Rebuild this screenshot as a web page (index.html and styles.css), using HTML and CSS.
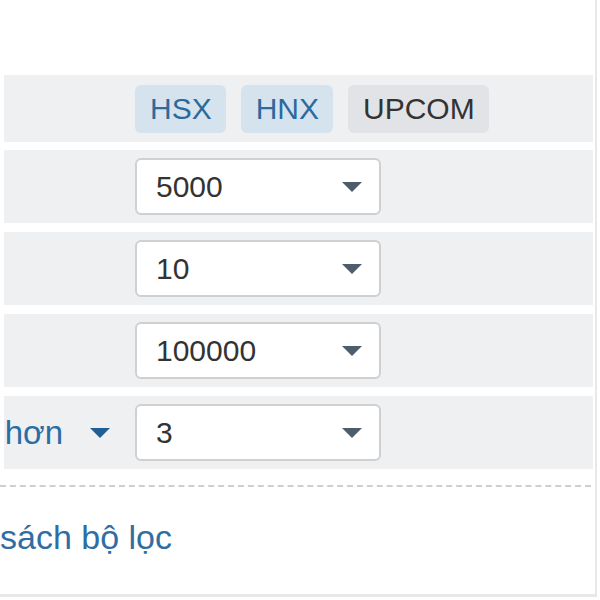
FILE: index.html
```html
<!DOCTYPE html>
<html lang="vi">
<head>
<meta charset="utf-8">
<link rel="stylesheet" href="styles.css">
</head>
<body>
<div class="panel">
  <div class="row row-ex">
    <div class="label"></div>
    <div class="badges">
      <span class="badge badge-on">HSX</span>
      <span class="badge badge-on">HNX</span>
      <span class="badge badge-off">UPCOM</span>
    </div>
  </div>
  <div class="row">
    <div class="label"></div>
    <div class="select"><span>5000</span><span class="caret"></span></div>
  </div>
  <div class="row">
    <div class="label"></div>
    <div class="select"><span>10</span><span class="caret"></span></div>
  </div>
  <div class="row">
    <div class="label"></div>
    <div class="select"><span>100000</span><span class="caret"></span></div>
  </div>
  <div class="row">
    <div class="label"><span class="label-text">hơn</span><span class="caret caret-blue"></span></div>
    <div class="select"><span>3</span><span class="caret"></span></div>
  </div>
  <div class="divider"></div>
  <div class="footer"><span class="link">sách bộ lọc</span></div>
</div>
</body>
</html>
```
FILE: styles.css
```css
html, body {
  margin: 0;
  padding: 0;
  background: #ffffff;
  overflow: hidden;
}
body {
  font-family: "Liberation Sans", Arial, sans-serif;
  font-size: 30px;
  color: #333;
}
.panel {
  box-sizing: border-box;
  width: 597px;
  height: 597px;
  padding-top: 75px;
  border-right: 2px solid #e7e8ea;
  border-bottom: 3px solid #e7e8ea;
}
.row {
  display: grid;
  grid-template-columns: 131px 246px 1fr;
  align-items: center;
  height: 73px;
  margin: 0 2px 9px 4px;
  background: #eff0f2;
}
.row-ex {
  height: 67px;
  margin-bottom: 8px;
}
.label {
  display: flex;
  justify-content: flex-end;
  align-items: center;
  white-space: nowrap;
  padding-right: 25px;
  color: #2a6ea6;
  min-width: 0;
}
.label-text {
  font-size: 33px;
  margin-right: 27px;
  margin-left: -8px;
}
.badges {
  display: flex;
  gap: 15px;
  grid-column: 2 / 4;
}
.badge {
  display: inline-flex;
  align-items: center;
  height: 48px;
  padding: 0 14px 0 15px;
  border-radius: 6px;
}
.badge-on {
  background: #d5e3ef;
  color: #2c6a9c;
}
.badge-off {
  background: #e1e3e6;
  color: #333;
}
.select {
  box-sizing: border-box;
  height: 57px;
  display: flex;
  align-items: center;
  justify-content: space-between;
  padding: 0 17px 0 19px;
  background: #fff;
  border: 2px solid #cfd0d2;
  border-radius: 6px;
}
.caret {
  width: 0;
  height: 0;
  border-left: 10px solid transparent;
  border-right: 10px solid transparent;
  border-top: 10px solid #4d5d6c;
}
.caret-blue {
  border-top-color: #1f5f93;
}
.divider {
  margin: 16px 4px 0 0;
  border-top: 2px dashed #cfcfcf;
}
.footer {
  display: flex;
  margin-top: 31px;
  white-space: nowrap;
}
.link {
  color: #2f6ea3;
  font-size: 34px;
}
```
